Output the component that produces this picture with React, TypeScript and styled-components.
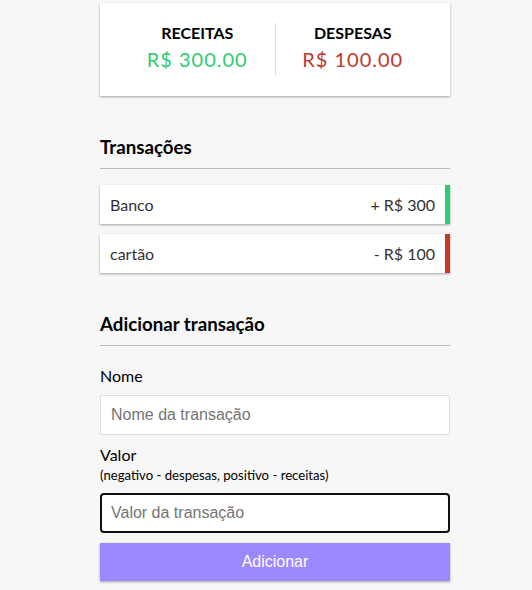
import React from "react";
import styled, { createGlobalStyle } from "styled-components";

const GlobalStyle = createGlobalStyle`
  * { box-sizing: border-box; }
  body {
    margin: 0;
    background-color: #f7f7f7;
    font-family: Lato, "Noto Sans", sans-serif;
    font-size: 16px;
  }
`;

const shadow = "0 1px 3px rgba(0,0,0,0.12), 0 1px 2px rgba(0,0,0,0.24)";

const Container = styled.div`
  width: 350px;
  margin: 3px 0 0 100px;
  padding-bottom: 30px;
`;

const IncExp = styled.div`
  background-color: #fff;
  box-shadow: ${shadow};
  padding: 20px;
  display: flex;
  justify-content: space-between;
`;

const IncExpCol = styled.div<{ $divider?: boolean }>`
  flex: 1;
  text-align: center;
  border-right: ${(p) => (p.$divider ? "1px solid #dedede" : "none")};
`;

const ColTitle = styled.h4`
  margin: 0;
  font-size: 16px;
  font-weight: 700;
  line-height: 19px;
  text-transform: uppercase;
  color: #000;
`;

const Money = styled.p<{ $kind: "plus" | "minus" }>`
  font-size: 20px;
  line-height: 24px;
  letter-spacing: 1px;
  margin: 5px 0;
  color: ${(p) => (p.$kind === "plus" ? "#2ecc71" : "#c0392b")};
`;

const SectionTitle = styled.h3`
  border-bottom: 1px solid #bbb;
  padding-bottom: 10px;
  margin: 40px 0 16px;
  font-size: 18.72px;
  line-height: 22px;
  font-weight: 700;
  color: #000;
`;

const List = styled.ul`
  list-style-type: none;
  padding: 0;
  margin: 0 0 40px;
`;

const Item = styled.li<{ $kind: "plus" | "minus" }>`
  background-color: #fff;
  box-shadow: ${shadow};
  color: #333;
  display: flex;
  justify-content: space-between;
  padding: 10px;
  margin: 0 0 10px;
  line-height: 19px;
  border-right: 5px solid ${(p) => (p.$kind === "plus" ? "#2ecc71" : "#c0392b")};
  &:last-child { margin-bottom: 0; }
`;

const FormTitle = styled(SectionTitle)`
  margin-bottom: 10px;
`;

const FormControl = styled.div``;

const Label = styled.label`
  display: inline-block;
  margin: 10px 0;
  line-height: 19px;
  color: #000;
`;

const Small = styled.small`
  font-size: 13.15px;
  line-height: 13px;
`;

const Input = styled.input<{ $focused?: boolean }>`
  display: block;
  width: 100%;
  font-family: "Liberation Sans", Arial, sans-serif;
  font-size: 16px;
  line-height: 18px;
  padding: ${(p) => (p.$focused ? "9px" : "10px")};
  border: ${(p) => (p.$focused ? "2px solid #101010" : "1px solid #dedede")};
  border-radius: ${(p) => (p.$focused ? "4px" : "2px")};
  background: #fff;
  outline: none;
  &::placeholder { color: #757575; }
`;

const Button = styled.button`
  cursor: pointer;
  background-color: #9c88ff;
  box-shadow: ${shadow};
  color: #fff;
  border: 0;
  display: block;
  font-family: "Liberation Sans", Arial, sans-serif;
  font-size: 16px;
  line-height: 18px;
  margin: 10px 0 30px;
  padding: 10px;
  width: 100%;
`;

export default function App() {
  return (
    <>
      <GlobalStyle />
      <Container>
        <IncExp>
          <IncExpCol $divider>
            <ColTitle>Receitas</ColTitle>
            <Money $kind="plus">R$ 300.00</Money>
          </IncExpCol>
          <IncExpCol>
            <ColTitle>Despesas</ColTitle>
            <Money $kind="minus">R$ 100.00</Money>
          </IncExpCol>
        </IncExp>

        <SectionTitle>Transações</SectionTitle>
        <List>
          <Item $kind="plus">
            <span>Banco</span>
            <span>+ R$ 300</span>
          </Item>
          <Item $kind="minus">
            <span>cartão</span>
            <span>- R$ 100</span>
          </Item>
        </List>

        <FormTitle>Adicionar transação</FormTitle>
        <form onSubmit={(e) => e.preventDefault()}>
          <FormControl>
            <Label htmlFor="text">Nome</Label>
            <Input id="text" type="text" placeholder="Nome da transação" />
          </FormControl>
          <FormControl>
            <Label htmlFor="amount">
              Valor <br />
              <Small>(negativo - despesas, positivo - receitas)</Small>
            </Label>
            <Input id="amount" type="number" $focused placeholder="Valor da transação" />
          </FormControl>
          <Button>Adicionar</Button>
        </form>
      </Container>
    </>
  );
}
